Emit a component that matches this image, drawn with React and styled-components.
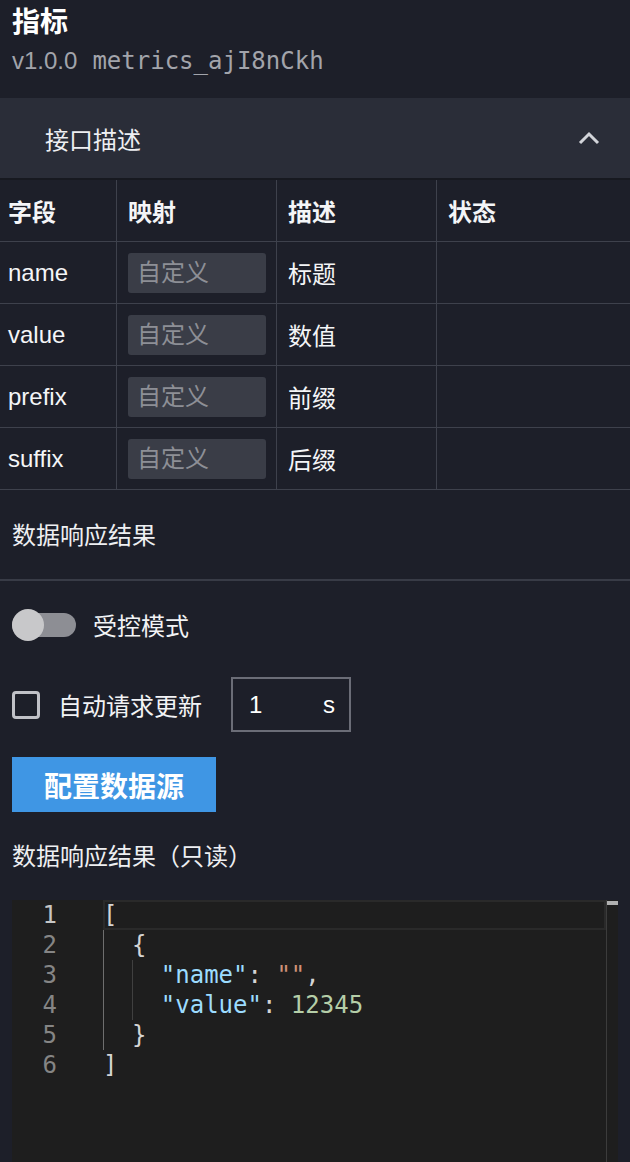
import React, { useState } from 'react';
import styled, { createGlobalStyle } from 'styled-components';

const GlobalStyle = createGlobalStyle`
  html, body {
    margin: 0;
    padding: 0;
    height: 1162px;
    overflow: hidden;
    background-color: #1d1f29;
  }
  body {
    font-family: 'Liberation Sans', 'Noto Sans CJK SC', sans-serif;
    color: #f2f3f5;
  }
  * {
    box-sizing: border-box;
  }
`;

const Page = styled.div`
  display: flex;
  flex-direction: column;
  width: 630px;
  min-height: 1162px;
  background-color: #1d1f29;
`;

const Header = styled.div`
  display: flex;
  flex-direction: column;
  padding: 8px 12px 24px;
`;

const Title = styled.div`
  font-size: 28px;
  line-height: 30px;
  font-weight: bold;
  color: #ffffff;
`;

const Subtitle = styled.div`
  display: flex;
  gap: 15px;
  margin-top: 10px;
  font-size: 24px;
  line-height: 26px;
  color: #a2a4ab;
`;

const Mono = styled.span`
  font-family: 'DejaVu Sans Mono', monospace;
`;

const PanelHeader = styled.div`
  display: flex;
  align-items: center;
  justify-content: space-between;
  height: 82px;
  padding: 0 30px 0 45px;
  background-color: #2a2d38;
  border-bottom: 2px solid #171920;
  font-size: 24px;
  color: #eeeff2;
  cursor: pointer;
`;

const Grid = styled.div`
  display: grid;
  grid-template-columns: 117px 160px 160px 1fr;
`;

const Cell = styled.div`
  display: flex;
  align-items: center;
  height: 62px;
  padding-left: ${({ first }) => (first ? '8px' : '11px')};
  border-bottom: 1px solid #3e414c;
  border-right: ${({ last }) => (last ? 'none' : '1px solid #3e414c')};
  font-size: 24px;
  font-weight: ${({ head }) => (head ? 'bold' : 'normal')};
  color: #f4f5f7;
`;

const MapInput = styled.input`
  width: 138px;
  height: 40px;
  padding: 0 9px;
  border: none;
  border-radius: 3px;
  outline: none;
  background-color: #3a3d47;
  font-family: 'Liberation Sans', 'Noto Sans CJK SC', sans-serif;
  font-size: 24px;
  color: #f2f3f5;

  &::placeholder {
    color: #8d8f96;
  }
`;

const SectionTitle = styled.div`
  padding: ${({ divided }) => (divided ? '31px 12px 28px' : '0 12px')};
  margin-top: ${({ gapTop }) => gapTop || 0}px;
  border-bottom: ${({ divided }) => (divided ? '2px solid #383b46' : 'none')};
  font-size: 24px;
  line-height: 30px;
  color: #eeeff2;
`;

const Controls = styled.div`
  display: flex;
  flex-direction: column;
  align-items: flex-start;
  padding: 27px 12px 0;
`;

const Row = styled.label`
  display: flex;
  align-items: center;
  height: ${({ h }) => h}px;
  margin-top: ${({ gapTop }) => gapTop || 0}px;
  font-size: 24px;
  color: #f2f3f5;
`;

const Track = styled.span`
  display: flex;
  align-items: center;
  width: 64px;
  height: 24px;
  border-radius: 12px;
  background-color: ${({ on }) => (on ? '#3f96e4' : '#8d8e94')};
  justify-content: ${({ on }) => (on ? 'flex-end' : 'flex-start')};
`;

const Knob = styled.span`
  flex: none;
  width: 32px;
  height: 32px;
  border-radius: 50%;
  background-color: #c8c8ca;
`;

const Label = styled.span`
  margin-left: ${({ gap }) => gap}px;
`;

const Check = styled.span`
  width: 28px;
  height: 28px;
  border: 3px solid #c0c1c7;
  border-radius: 4px;
  background-color: ${({ on }) => (on ? '#3f96e4' : 'transparent')};
`;

const Interval = styled.div`
  display: flex;
  align-items: center;
  justify-content: space-between;
  width: 120px;
  height: 55px;
  margin-left: 29px;
  padding: 0 14px 0 16px;
  border: 2px solid #6b6d77;
  font-size: 24px;
  color: #ffffff;
`;

const Button = styled.button`
  width: 204px;
  height: 55px;
  margin-top: 25px;
  border: none;
  background-color: #3f96e4;
  font-family: 'Liberation Sans', 'Noto Sans CJK SC', sans-serif;
  font-size: 28px;
  font-weight: bold;
  color: #ffffff;
  cursor: pointer;
`;

const Editor = styled.div`
  display: flex;
  width: 606px;
  height: 280px;
  margin: 28px 0 0 12px;
  background-color: #1e1e1e;
  font-family: 'DejaVu Sans Mono', monospace;
  font-size: 24px;
  line-height: 30px;
`;

const Gutter = styled.div`
  display: flex;
  flex-direction: column;
  width: 91px;
  padding-right: 46px;
  text-align: right;
`;

const LineNo = styled.div`
  height: 30px;
  color: ${({ active }) => (active ? '#c6c6c6' : '#858585')};
`;

const Code = styled.div`
  flex: 1;
  display: flex;
  flex-direction: column;
`;

const Line = styled.div`
  height: 30px;
  white-space: pre;
  box-shadow: ${({ active }) => (active ? 'inset 0 0 0 2px #2a2a2a' : 'none')};
`;

const Indent = styled.span`
  display: inline-block;
  width: 2ch;
  height: 30px;
  vertical-align: top;
  box-shadow: inset 1px 0 0 ${({ active }) => (active ? '#6e6e6e' : '#404040')};
`;

const tokenColors = {
  punct: '#d4d4d4',
  key: '#9cdcfe',
  string: '#ce9178',
  number: '#b5cea8',
};

const Token = styled.span`
  color: ${({ kind }) => tokenColors[kind]};
`;

const ScrollTrack = styled.div`
  display: flex;
  flex-direction: column;
  width: 12px;
  border-left: 1px solid #3c3c3c;
`;

const CursorMark = styled.div`
  height: 4px;
  margin-top: 1px;
  background-color: #b0b0b0;
`;

const fields = [
  { name: 'name', desc: '标题' },
  { name: 'value', desc: '数值' },
  { name: 'prefix', desc: '前缀' },
  { name: 'suffix', desc: '后缀' },
];

const lines = [
  { indent: 0, tokens: [['[', 'punct']] },
  { indent: 1, tokens: [['{', 'punct']] },
  {
    indent: 2,
    tokens: [
      ['"name"', 'key'],
      [': ', 'punct'],
      ['""', 'string'],
      [',', 'punct'],
    ],
  },
  {
    indent: 2,
    tokens: [
      ['"value"', 'key'],
      [': ', 'punct'],
      ['12345', 'number'],
    ],
  },
  { indent: 1, tokens: [['}', 'punct']] },
  { indent: 0, tokens: [[']', 'punct']] },
];

const ChevronUp = () => (
  <svg width="22" height="14" viewBox="0 0 22 14">
    <polyline points="2,12 11,3 20,12" fill="none" stroke="#d2d4d9" strokeWidth="3" />
  </svg>
);

const App = () => {
  const [controlled, setControlled] = useState(false);
  const [autoUpdate, setAutoUpdate] = useState(false);

  return (
    <Page>
      <GlobalStyle />
      <Header>
        <Title>指标</Title>
        <Subtitle>
          <span>v1.0.0</span>
          <Mono>metrics_ajI8nCkh</Mono>
        </Subtitle>
      </Header>

      <PanelHeader>
        <span>接口描述</span>
        <ChevronUp />
      </PanelHeader>

      <Grid>
        <Cell head first>字段</Cell>
        <Cell head>映射</Cell>
        <Cell head>描述</Cell>
        <Cell head last>状态</Cell>
        {fields.map((field) => (
          <React.Fragment key={field.name}>
            <Cell first>{field.name}</Cell>
            <Cell>
              <MapInput placeholder="自定义" />
            </Cell>
            <Cell>{field.desc}</Cell>
            <Cell last />
          </React.Fragment>
        ))}
      </Grid>

      <SectionTitle divided>数据响应结果</SectionTitle>

      <Controls>
        <Row h={33} onClick={() => setControlled(!controlled)}>
          <Track on={controlled ? 1 : 0}>
            <Knob />
          </Track>
          <Label gap={17}>受控模式</Label>
        </Row>
        <Row h={55} gapTop={36}>
          <Check on={autoUpdate ? 1 : 0} onClick={() => setAutoUpdate(!autoUpdate)} />
          <Label gap={18}>自动请求更新</Label>
          <Interval>
            <span>1</span>
            <span>s</span>
          </Interval>
        </Row>
        <Button>配置数据源</Button>
      </Controls>

      <SectionTitle gapTop={30}>数据响应结果（只读）</SectionTitle>

      <Editor>
        <Gutter>
          {lines.map((line, i) => (
            <LineNo key={i} active={i === 0}>
              {i + 1}
            </LineNo>
          ))}
        </Gutter>
        <Code>
          {lines.map((line, i) => (
            <Line key={i} active={i === 0}>
              {Array.from({ length: line.indent }).map((_, level) => (
                <Indent key={level} active={level === 0} />
              ))}
              {line.tokens.map(([text, kind], j) => (
                <Token key={j} kind={kind}>
                  {text}
                </Token>
              ))}
            </Line>
          ))}
        </Code>
        <ScrollTrack>
          <CursorMark />
        </ScrollTrack>
      </Editor>
    </Page>
  );
};

export default App;
